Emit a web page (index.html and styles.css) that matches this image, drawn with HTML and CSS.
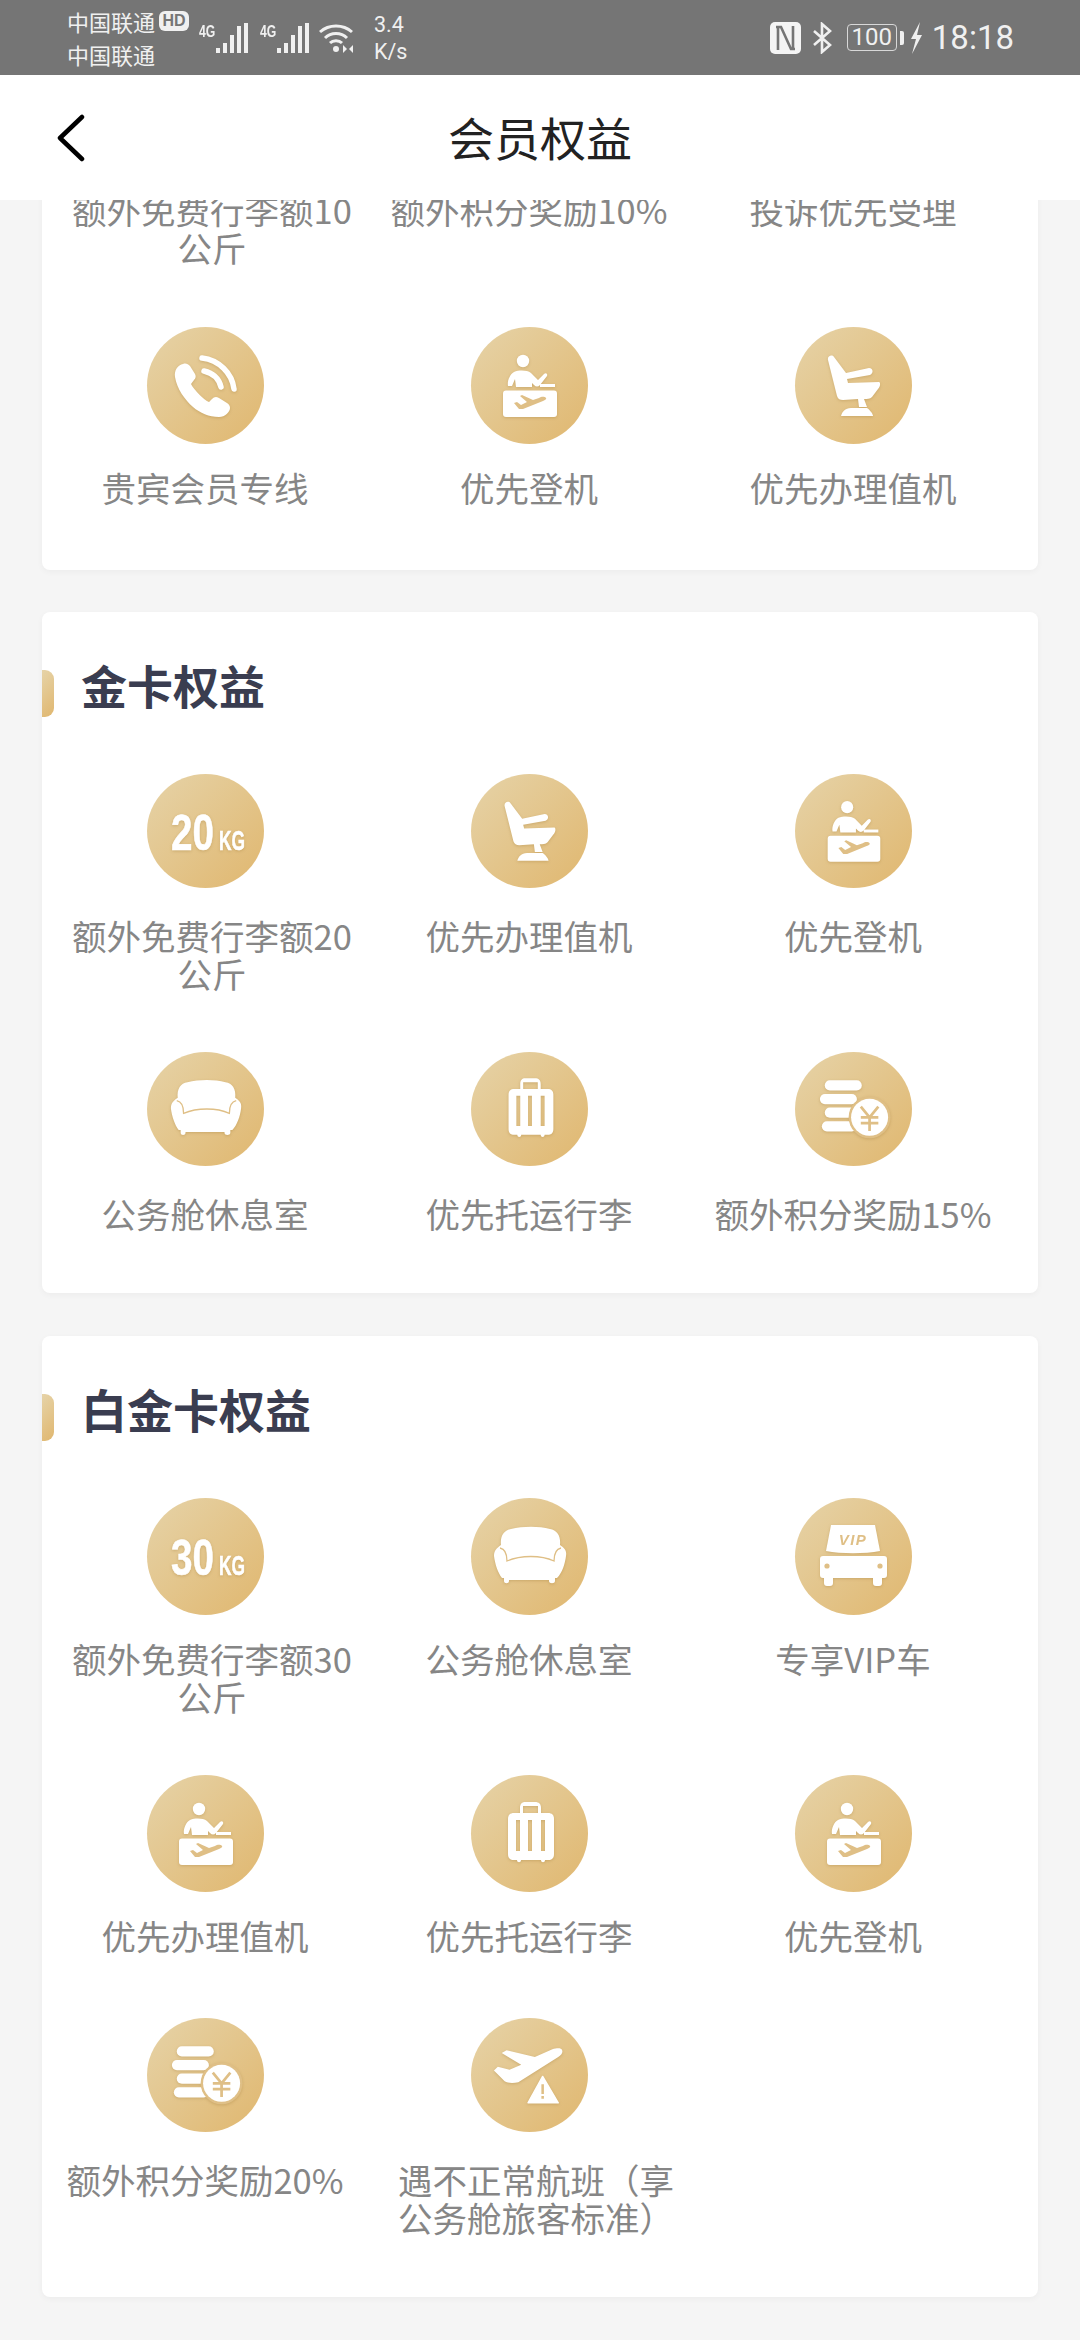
FILE: index.html
```html
<!DOCTYPE html>
<html lang="zh-CN">
<head>
  <meta charset="UTF-8" />
  <title>会员权益</title>
  <link rel="stylesheet" href="styles.css">
</head>
<body>

  <!-- icon set, all drawn on a 117 x 117 badge -->
  <svg class="defs" xmlns="http://www.w3.org/2000/svg" aria-hidden="true">
    <symbol id="i-phone" viewBox="0 0 117 117">
      <path fill="#fff" d="M36 37C31 38 27 43 28 50C30 62 38 73 46 80C53 86 62 90 72 90C78 90 83 85 83 81C83 79 82 77 80 76L72 71C69 69 67 70 65 72L62 75C57 73 47 63 44 57L47 53C49 51 49 49 48 47L43 39C41 37 39 36 36 37Z"/>
      <path fill="none" stroke="#fff" stroke-width="5.5" stroke-linecap="round" d="M55 31C72 33 85 46 87 62M57 44C66 46 72 52 74 60"/>
    </symbol>
    <symbol id="i-checkin" viewBox="0 0 117 117">
      <circle cx="52" cy="34" r="6.2" fill="#fff"/>
      <path fill="#fff" d="M43 45C48 43 56 43 60 46L67 53L73 47C75 45 77 47 76 49L69 58C67 60 65 60 63 58L61 56V60H45L44 52L41 59H37C36 54 39 47 43 45Z"/>
      <rect x="69" y="57" width="15" height="3" fill="#fff"/>
      <rect x="32" y="63.500" width="54" height="26.500" rx="3" fill="#fff"/>
      <path fill="#dfbf86" d="M75 71C73 69 70 70 68 71L62 73L51 68L49 69L56 75L50 78L46 75L43 76L48 82H52L72 74C74 73 76 72 75 71Z"/>
    </symbol>
    <symbol id="i-seat" viewBox="0 0 117 117">
      <path fill="#fff" d="M33 33C32 29 37 27 39 30L51 46L74 41C78 41 79 46 75 48L52 52L53 56L84 55C86 56 85 60 83 62L77 70C75 72 72 72 69 72L72 80H64L63 72L48 73C45 73 43 72 42 69Z"/>
      <path fill="#fff" d="M46 89C47 85 50 81 56 81H72C75 83 78 87 78 89Z"/>
    </symbol>
    <symbol id="i-sofa" viewBox="0 0 117 117">
      <path fill="#fff" d="M30 47C29 38 33 32 40 31C52 28 68 28 79 31C86 32 90 38 89 47C93 50 96 52 95 58C94 66 91 75 86 80H84V83C84 86 78 86 78 83V82H38V83C38 86 33 86 33 83V80H31C27 75 24 66 23 58C23 52 26 50 30 47Z"/>
      <path fill="none" stroke="#dfbf86" stroke-width="1.3" d="M29 50C34 51 36 56 36 63C50 57 70 57 83 63C83 56 85 51 90 50"/>
    </symbol>
    <symbol id="i-case" viewBox="0 0 117 117">
      <path fill="#fff" fill-rule="evenodd" d="M54 27H64C68 27 70 29 70 33V38H77C81 38 83 40 83 44V79C83 83 81 85 77 85H74C74 88 70 88 70 85H50C50 88 46 88 46 85H43C39 85 37 83 37 79V44C37 40 39 38 43 38H49V33C49 29 51 27 54 27ZM52 31V38H67V31ZM45 45V76H49V45ZM57 45V76H61V45ZM70 45V76H74V45Z"/>
    </symbol>
    <symbol id="i-coins" viewBox="0 0 117 117">
      <rect x="29" y="29" width="38" height="10.5" rx="5.2" fill="#fff"/>
      <rect x="24" y="43" width="38" height="10.5" rx="5.2" fill="#fff"/>
      <rect x="29" y="57" width="34" height="10.5" rx="5.2" fill="#fff"/>
      <rect x="26" y="71" width="36" height="10.5" rx="5.2" fill="#fff"/>
      <circle cx="75" cy="67" r="21.500" fill="#dfbf86"/>
      <circle cx="75" cy="67" r="19" fill="#fff"/>
      <path fill="none" stroke="#dfbf86" stroke-width="2.8" d="M66 56L75 67L84 56M66 67H84M66 73H84M75 66V81"/>
    </symbol>
    <symbol id="i-vip" viewBox="0 0 117 117">
      <path fill="#fff" d="M36 27H80L85 53C70 56 46 56 31 53Z"/>
      <path fill="#fff" d="M28 58H89C91 58 92 59 92 61V77C92 79 91 80 89 80H87V85C87 87 86 88 84 88H81C79 88 78 87 78 85V80H38V85C38 87 37 88 35 88H32C30 88 29 87 29 85V80H28C26 80 25 79 25 77V61C25 59 26 58 28 58Z"/>
      <circle cx="32" cy="68" r="2.6" fill="#dfbf86"/>
      <circle cx="85" cy="68" r="2.6" fill="#dfbf86"/>
      <text class="vip-text" x="58" y="47">VIP</text>
    </symbol>
    <symbol id="i-delay" viewBox="0 0 117 117">
      <path fill="#fff" d="M92 33C91 30 86 31 82 32L64 40L35 33L30 36L50 48L38 53L26 50L22 54L33 65C36 67 42 67 47 66L88 40C91 38 93 36 92 33Z"/>
      <path fill="#fff" d="M72 60L88 87H57Z" stroke="#fff" stroke-width="1.5" stroke-linejoin="round"/>
      <path fill="none" stroke="#dfbf86" stroke-width="2.6" d="M72 68V78M72 80V83"/>
    </symbol>
  </svg>

  <div class="statusbar">
    <div class="carriers">
      <div class="carrier-line">中国联通<span class="hd">HD</span></div>
      <div class="carrier-line">中国联通</div>
    </div>
    <div class="signal">
      <span class="net">4G</span>
      <svg class="bars" viewBox="0 0 32 30"><path fill="#f0f0f0" d="M0 25h4v5H0zM7 20h4v10H7zM14 12h4v18h-4zM21 3h4v27h-4zM28 0h4v30h-4z"/></svg>
    </div>
    <div class="signal">
      <span class="net">4G</span>
      <svg class="bars" viewBox="0 0 32 30"><path fill="#f0f0f0" d="M0 25h4v5H0zM7 20h4v10H7zM14 12h4v18h-4zM21 3h4v27h-4zM28 0h4v30h-4z"/></svg>
    </div>
    <svg class="wifi" viewBox="0 0 36 30">
      <path fill="none" stroke="#f0f0f0" stroke-width="3" d="M1 9C10 1 24 1 33 9M6 15C12 9 22 9 28 15M11 20C14 17 20 17 23 20"/>
      <circle cx="17" cy="26" r="3" fill="#f0f0f0"/>
      <path fill="#f0f0f0" d="M24 22l4 4-4 4zM34 22l-4 4 4 4z"/>
    </svg>
    <div class="speed">3.4<br>K/s</div>
    <div class="status-right">
      <svg class="nfc" viewBox="0 0 31 32">
        <rect width="31" height="32" rx="5" fill="#f4f4f4"/>
        <path fill="none" stroke="#757575" stroke-width="2.6" d="M8 4V28M23 4V28M6 5H11L21 27H25"/>
      </svg>
      <svg class="bt" viewBox="0 0 19 32">
        <path fill="none" stroke="#f0f0f0" stroke-width="2.6" d="M1 9L17 23L9 30V2L17 9L1 23"/>
      </svg>
      <div class="battery">100</div>
      <div class="battery-cap"></div>
      <svg class="bolt" viewBox="0 0 12 32"><path fill="#f0f0f0" d="M10 0L1 17H6L2 32L12 13H7Z"/></svg>
      <div class="clock">18:18</div>
    </div>
  </div>

  <div class="topbar">
    <svg class="back" viewBox="0 0 28 48">
      <path fill="none" stroke="#000" stroke-width="4.5" stroke-linecap="round" stroke-linejoin="round" d="M25 3L3 24L25 45"/>
    </svg>
    <h1>会员权益</h1>
  </div>

  <div class="main">

    <section class="card card-cut">
      <div class="grid">
        <div class="cell"><div class="label label-wrap">额外免费行李额10公斤</div></div>
        <div class="cell"><div class="label">额外积分奖励10%</div></div>
        <div class="cell"><div class="label">投诉优先受理</div></div>

        <div class="cell cell-tall">
          <div class="badge"><svg preserveAspectRatio="none"><use href="#i-phone"/></svg></div>
          <div class="label">贵宾会员专线</div>
        </div>
        <div class="cell cell-tall">
          <div class="badge"><svg preserveAspectRatio="none"><use href="#i-checkin"/></svg></div>
          <div class="label">优先登机</div>
        </div>
        <div class="cell cell-tall">
          <div class="badge"><svg preserveAspectRatio="none"><use href="#i-seat"/></svg></div>
          <div class="label">优先办理值机</div>
        </div>
      </div>
    </section>

    <section class="card">
      <div class="card-head">
        <span class="marker"></span>
        <h2>金卡权益</h2>
      </div>
      <div class="grid">
        <div class="cell cell-short">
          <div class="badge">
            <svg viewBox="0 0 117 114" preserveAspectRatio="none">
              <text class="kg-num" x="24" y="76" textLength="43" lengthAdjust="spacingAndGlyphs">20</text>
              <text class="kg-unit" x="72" y="76" textLength="26" lengthAdjust="spacingAndGlyphs">KG</text>
            </svg>
          </div>
          <div class="label label-wrap">额外免费行李额20公斤</div>
        </div>
        <div class="cell cell-short">
          <div class="badge"><svg preserveAspectRatio="none"><use href="#i-seat"/></svg></div>
          <div class="label">优先办理值机</div>
        </div>
        <div class="cell cell-short">
          <div class="badge"><svg preserveAspectRatio="none"><use href="#i-checkin"/></svg></div>
          <div class="label">优先登机</div>
        </div>

        <div class="cell cell-short">
          <div class="badge"><svg preserveAspectRatio="none"><use href="#i-sofa"/></svg></div>
          <div class="label">公务舱休息室</div>
        </div>
        <div class="cell cell-short">
          <div class="badge"><svg preserveAspectRatio="none"><use href="#i-case"/></svg></div>
          <div class="label">优先托运行李</div>
        </div>
        <div class="cell cell-short">
          <div class="badge"><svg preserveAspectRatio="none"><use href="#i-coins"/></svg></div>
          <div class="label">额外积分奖励15%</div>
        </div>
      </div>
    </section>

    <section class="card">
      <div class="card-head">
        <span class="marker"></span>
        <h2>白金卡权益</h2>
      </div>
      <div class="grid">
        <div class="cell cell-tall">
          <div class="badge">
            <svg viewBox="0 0 117 117" preserveAspectRatio="none">
              <text class="kg-num" x="24" y="77" textLength="43" lengthAdjust="spacingAndGlyphs">30</text>
              <text class="kg-unit" x="72" y="77" textLength="26" lengthAdjust="spacingAndGlyphs">KG</text>
            </svg>
          </div>
          <div class="label label-wrap">额外免费行李额30公斤</div>
        </div>
        <div class="cell cell-tall">
          <div class="badge"><svg preserveAspectRatio="none"><use href="#i-sofa"/></svg></div>
          <div class="label">公务舱休息室</div>
        </div>
        <div class="cell cell-tall">
          <div class="badge"><svg preserveAspectRatio="none"><use href="#i-vip"/></svg></div>
          <div class="label">专享VIP车</div>
        </div>

        <div class="cell cell-tall">
          <div class="badge"><svg preserveAspectRatio="none"><use href="#i-checkin"/></svg></div>
          <div class="label">优先办理值机</div>
        </div>
        <div class="cell cell-tall">
          <div class="badge"><svg preserveAspectRatio="none"><use href="#i-case"/></svg></div>
          <div class="label">优先托运行李</div>
        </div>
        <div class="cell cell-tall">
          <div class="badge"><svg preserveAspectRatio="none"><use href="#i-checkin"/></svg></div>
          <div class="label">优先登机</div>
        </div>

        <div class="cell cell-short">
          <div class="badge"><svg preserveAspectRatio="none"><use href="#i-coins"/></svg></div>
          <div class="label">额外积分奖励20%</div>
        </div>
        <div class="cell cell-short">
          <div class="badge"><svg preserveAspectRatio="none"><use href="#i-delay"/></svg></div>
          <div class="label label-wrap">遇不正常航班（享公务舱旅客标准）</div>
        </div>
      </div>
    </section>

  </div>

</body>
</html>
```

FILE: styles.css
```css
* {
  box-sizing: border-box;
}
body {
  margin: 0;
  width: 1080px;
  height: 2340px;
  overflow: hidden;
  background: #f5f5f5;
  font-family: "Noto Sans CJK SC", "Noto Sans", sans-serif;
  display: flex;
  flex-direction: column;
}
.defs {
  position: absolute;
  width: 0;
  height: 0;
}

/* Barre de statut */
.statusbar {
  height: 75px;
  flex: none;
  background: #757575;
  color: #f0f0f0;
  display: flex;
  align-items: center;
  padding: 0 66px 0 67px;
}
.carriers {
  width: 132px;
  font-size: 22px;
  line-height: 33px;
}
.carrier-line {
  display: flex;
  align-items: center;
  white-space: nowrap;
}
.hd {
  margin-left: 4px;
  width: 30px;
  height: 20px;
  border-radius: 6px;
  background: #f0f0f0;
  color: #757575;
  font: bold 16px/20px "Liberation Sans", sans-serif;
  text-align: center;
}
.signal {
  display: flex;
  align-items: flex-start;
  width: 61px;
}
.net {
  font: bold 17px/17px "Liberation Sans", sans-serif;
  width: 17px;
  transform: scaleX(0.72);
  transform-origin: left center;
}
.bars {
  width: 32px;
  height: 30px;
}
.wifi {
  width: 36px;
  height: 30px;
  margin-left: -2px;
}
.speed {
  margin-left: 19px;
  font: 21.5px/27px Roboto, sans-serif;
}
.status-right {
  margin-left: auto;
  display: flex;
  align-items: center;
}
.nfc {
  width: 31px;
  height: 32px;
}
.bt {
  width: 19px;
  height: 32px;
  margin-left: 12px;
}
.battery {
  margin-left: 15px;
  width: 50px;
  height: 27px;
  border: 1.5px solid #d8d8d8;
  border-radius: 4px;
  font: 24px/24px Roboto, sans-serif;
  text-align: center;
}
.battery-cap {
  width: 4px;
  height: 14px;
  margin-left: 3px;
  background: #f0f0f0;
  border-radius: 0 2px 2px 0;
}
.bolt {
  width: 12px;
  height: 32px;
  margin-left: 6px;
}
.clock {
  margin-left: 10px;
  font: 33px/40px Roboto, sans-serif;
}

/* En-tete */
.topbar {
  height: 125px;
  flex: none;
  padding-bottom: 4px;
  background: #fff;
  display: flex;
  align-items: center;
  justify-content: center;
  position: relative;
  z-index: 2;
}
.back {
  position: absolute;
  left: 57px;
  top: 39px;
  width: 28px;
  height: 48px;
}
h1 {
  margin: 0;
  font-size: 46px;
  font-weight: 400;
  color: #222;
}

/* Contenu */
.main {
  flex: 1;
  overflow: hidden;
  padding: 0 42px;
}
.card {
  background: #fff;
  border-radius: 8px;
  box-shadow: 0 2px 6px rgba(0, 0, 0, 0.04);
  margin-bottom: 43px;
  padding: 0 23px 61px 1px;
}
.card-cut {
  margin-top: -10px;
  margin-bottom: 42px;
  padding-bottom: 60px;
  border-radius: 0 0 8px 8px;
}
.card-cut .grid {
  row-gap: 61px;
}
.card-head {
  height: 162px;
  margin-left: -1px;
  padding-top: 44px;
  display: flex;
  align-items: flex-start;
}
.marker {
  width: 12px;
  height: 47px;
  margin-top: 14px;
  margin-right: 27px;
  border-radius: 0 9px 9px 0;
  background: linear-gradient(135deg, #e6d3a8, #e0b76f);
}
h2 {
  margin: 0;
  font-size: 46px;
  line-height: 56px;
  font-weight: 700;
  color: #3a3d50;
}
.grid {
  display: grid;
  grid-template-columns: repeat(3, 324px);
  row-gap: 60px;
}
.cell {
  display: flex;
  flex-direction: column;
  align-items: center;
}
.cell-tall {
  min-height: 183px;
}
.badge {
  width: 117px;
  height: 117px;
  flex: none;
  border-radius: 50%;
  background: linear-gradient(135deg, #e6d3a8, #e0b76f);
}
.badge svg {
  display: block;
  width: 100%;
  height: 100%;
  filter: drop-shadow(0 1px 1.5px rgba(150, 110, 40, 0.3));
}
.cell-short .badge {
  height: 114px;
}
.label {
  width: 290px;
  font-size: 34.5px;
  line-height: 38px;
  color: #868686;
  text-align: center;
}
.badge + .label {
  margin-top: 24px;
}
.cell-short .badge + .label {
  margin-top: 28px;
}
.label-wrap {
  margin-left: 14px;
}

.kg-num {
  font: bold 50px "Liberation Sans", sans-serif;
  fill: #fff;
  stroke: #fff;
  stroke-width: 0.6;
}
.kg-unit {
  font: bold 28px "Liberation Sans", sans-serif;
  fill: #fff;
  stroke: #fff;
  stroke-width: 0.6;
}
.vip-text {
  font: italic bold 15px "Liberation Sans", sans-serif;
  letter-spacing: 1.5px;
  text-anchor: middle;
  fill: #dfbf86;
}
```
